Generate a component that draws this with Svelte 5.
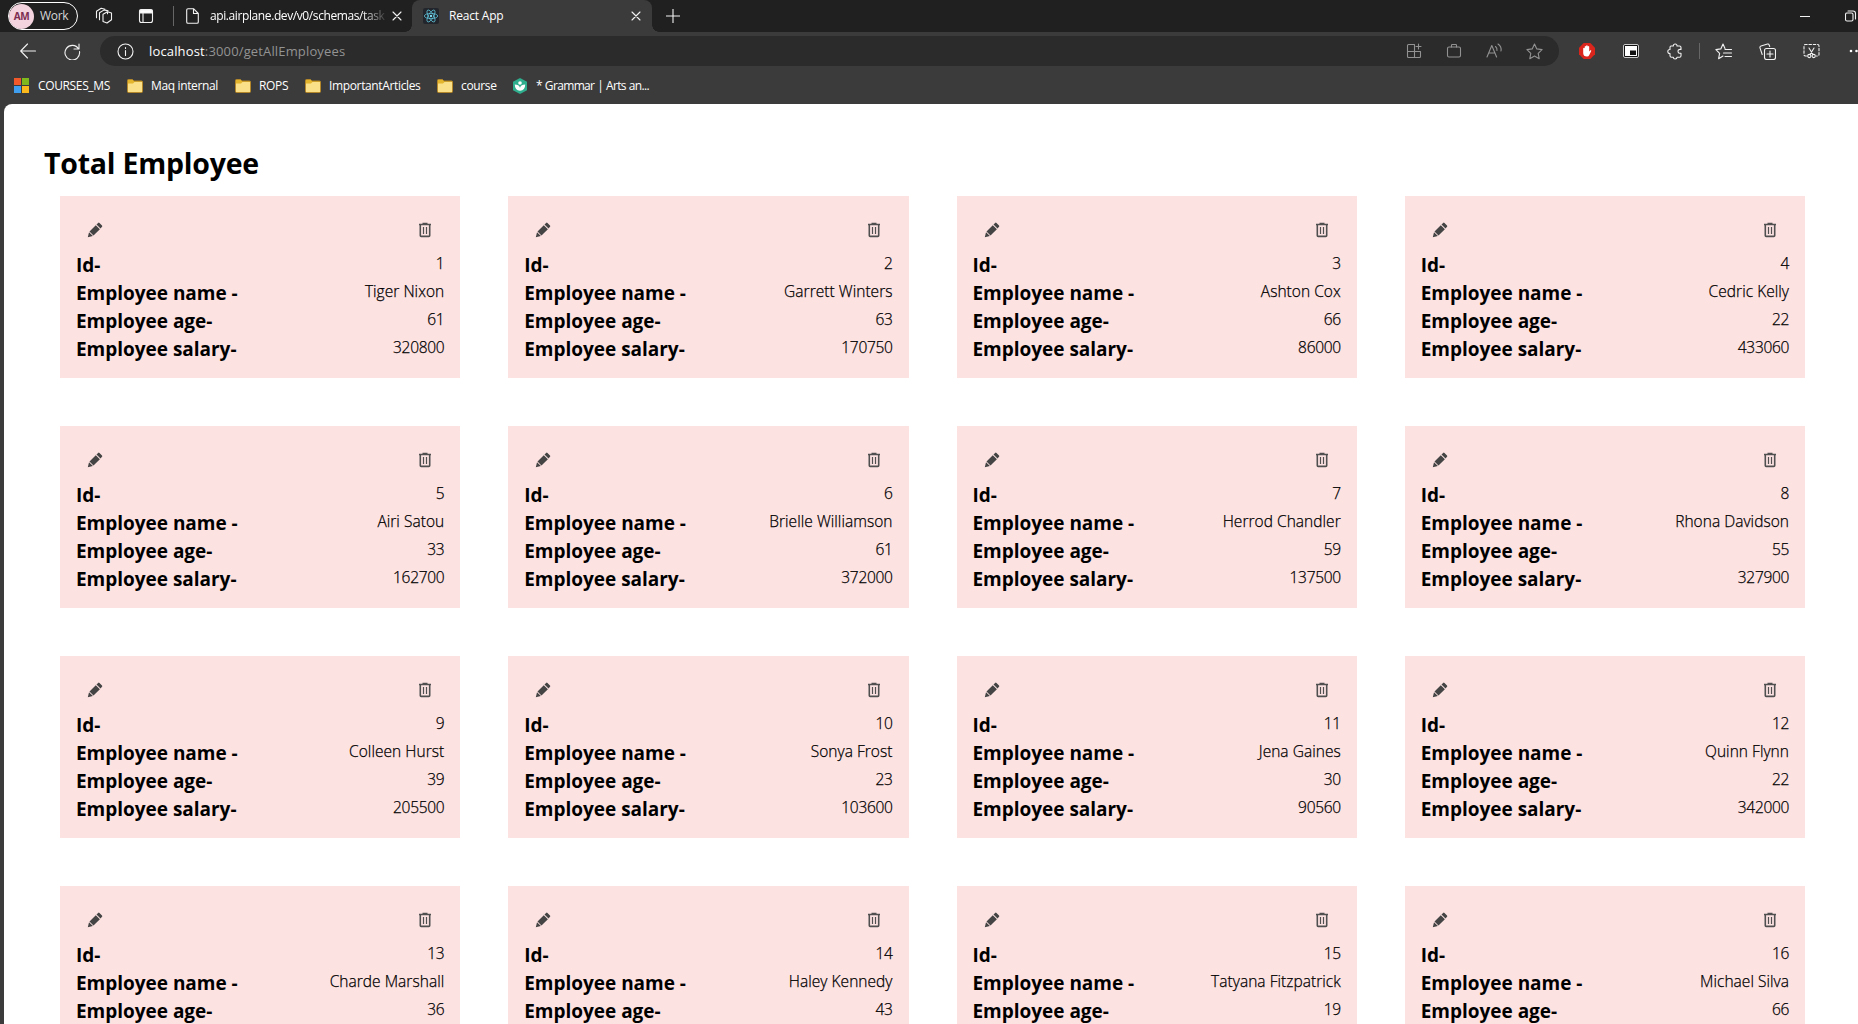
<script>
  const employees = [
    ['Tiger Nixon', 61, 320800],
    ['Garrett Winters', 63, 170750],
    ['Ashton Cox', 66, 86000],
    ['Cedric Kelly', 22, 433060],
    ['Airi Satou', 33, 162700],
    ['Brielle Williamson', 61, 372000],
    ['Herrod Chandler', 59, 137500],
    ['Rhona Davidson', 55, 327900],
    ['Colleen Hurst', 39, 205500],
    ['Sonya Frost', 23, 103600],
    ['Jena Gaines', 30, 90560],
    ['Quinn Flynn', 22, 342000],
    ['Charde Marshall', 36, 470600],
    ['Haley Kennedy', 43, 313500],
    ['Tatyana Fitzpatrick', 19, 385750],
    ['Michael Silva', 66, 198500]
  ].map(([name, age, salary], i) => ({ id: i + 1, name, age, salary }));
</script>

{#snippet folder()}
  <svg width="16" height="16" viewBox="0 0 16 16">
    <path d="M.5 2.500q0-1 1-1h4l1.500 1.500h7.500q1 0 1 1v9.500q0 1-1 1h-13q-1 0-1-1z" fill="#e3b52d" stroke="#b3872a" />
    <path d="M1 5.500h5l1.500-1.500h7.500v9.500q0 .5-.5.5h-13q-.5 0-.5-.5z" fill="#fbe08a" />
  </svg>
{/snippet}

{#snippet cross()}
  <svg width="10" height="10" viewBox="0 0 10 10" class="line"><path d="M1 1l8 8M9 1l-8 8" /></svg>
{/snippet}

<div class="browser">
  <div class="tabstrip">
    <div class="profile"><span class="avatar">AM</span><span class="work">Work</span></div>
    <svg class="line workspaces" width="18" height="18" viewBox="0 0 18 18">
      <path d="M8 7.200l4.500-2.400 4 1.200v6.700l-4.500 3.300-4-1.500zM12.500 4.800v2" />
      <path d="M4.500 12.800V5.700l4.700-2.800 3.800 1M1.500 10.800V4.200l4.700-2.900 3.800.9" />
    </svg>
    <svg class="line vertical" width="16" height="16" viewBox="0 0 16 16">
      <rect x="1.500" y="1.500" width="13" height="13" rx="2" />
      <path d="M2 2h12v3H2z" fill="#fff" /><path d="M5 5.500v9" />
    </svg>
    <span class="divider"></span>
    <div class="tab">
      <svg class="line" width="13" height="16" viewBox="0 0 13 16"><path d="M2 .7h5.500l4.800 4.800V14q0 1.300-1.300 1.300H2Q.7 15.300.7 14V2Q.7.700 2 .7zM7.500.7v4.800h4.800" /></svg>
      <span class="tabtext fade">api.airplane.dev/v0/schemas/task</span>
      {@render cross()}
    </div>
    <div class="tab active">
      <svg width="16" height="16" viewBox="0 0 16 16">
        <rect width="16" height="16" rx="2" fill="#22252b" />
        <g fill="none" stroke="#61c5de" stroke-width=".75">
          <ellipse cx="8" cy="8" rx="6.700" ry="2.600" />
          <ellipse cx="8" cy="8" rx="6.700" ry="2.600" transform="rotate(60 8 8)" />
          <ellipse cx="8" cy="8" rx="6.700" ry="2.600" transform="rotate(120 8 8)" />
        </g>
        <circle cx="8" cy="8" r="1.200" fill="#7fdcf2" />
      </svg>
      <span class="tabtext">React App</span>
      {@render cross()}
    </div>
    <svg class="line plus" width="14" height="14" viewBox="0 0 14 14"><path d="M7 0v14M0 7h14" /></svg>
    <svg class="line minimise" width="10" height="10" viewBox="0 0 10 10"><path d="M0 5.500h10" /></svg>
    <svg class="line restore" width="12" height="12" viewBox="0 0 12 12"><rect x=".5" y="3" width="7.500" height="8" rx="1.500" /><path d="M3 1h5q2.500 0 2.500 2.500V9" /></svg>
  </div>

  <div class="toolbar">
    <svg class="line back" width="17" height="16" viewBox="0 0 17 16"><path d="M15.500 8H.7M7.500 1L.7 8l6.800 7" /></svg>
    <svg class="line reload" width="17" height="17" viewBox="0 0 17 17"><path d="M14.600 6A7.300 7.300 0 1 0 15.500 8.500M15 1v5h-5" /></svg>
    <div class="address">
      <svg class="line info" width="17" height="17" viewBox="0 0 17 17"><circle cx="8.500" cy="8.500" r="7.500" /><path d="M8.500 7.500v5M8.500 4.500v1" /></svg>
      <span class="url"><b>localhost</b>:3000/getAllEmployees</span>
      <span class="slot"><svg class="line" width="16" height="16" viewBox="0 0 16 16"><path d="M8.500 1.500H2.500q-1 0-1 1v11q0 1 1 1h11q1 0 1-1V8.500H1.500M8.500 1.500v13M12.500 1v5M10 3.500h5" /></svg></span>
      <span class="slot"><svg class="line" width="16" height="16" viewBox="0 0 16 16"><rect x="1.500" y="4" width="13" height="10" rx="1.500" /><path d="M5.500 4V2.300q0-.8.8-.8h3.400q.8 0 .8.8V4" /></svg></span>
      <span class="slot"><svg class="line" width="17" height="16" viewBox="0 0 17 16"><path d="M1 14L5.800 2.500 10.600 14M2.700 10h6.200M9.500 3.500q1.800 1.500 1.500 4M12 1q3.800 2.500 3 7" /></svg></span>
      <span class="slot"><svg class="line" width="17" height="17" viewBox="0 0 17 17"><path d="M8.500 1l2.300 4.900 5.300.7-3.900 3.700 1 5.400-4.700-2.600-4.700 2.600 1-5.400L.9 6.600l5.300-.7z" /></svg></span>
    </div>
    <div class="extensions">
      <span class="slot">
        <svg width="16" height="16" viewBox="0 0 16 16">
          <path d="M4.700 0h6.600L16 4.700v6.600L11.300 16H4.700L0 11.300V4.700z" fill="#d9251c" />
          <path d="M4.200 8.500V5.300q.8-1 1.500 0V3.600q.7-1 1.400 0v-.9q.8-1 1.600 0v.9q.8-1 1.500 0v4.800l1.200-1.200q1.200-.3.8.8l-1.900 4q-.6 1.500-2.300 1.500Q4.200 13.500 4.200 10z" fill="#fff" />
        </svg>
      </span>
      <span class="slot">
        <svg width="16" height="16" viewBox="0 0 16 16">
          <rect x=".5" y="1.500" width="15" height="13" rx="1.500" fill="#111" stroke="#c8c8c8" />
          <rect x="2" y="3" width="12" height="10" fill="#fff" /><rect x="7" y="7.500" width="6" height="4.500" fill="#111" />
        </svg>
      </span>
      <span class="slot"><svg class="line" width="16" height="17" viewBox="0 0 16 17"><path d="M4 3h2.300Q6.300 1 8.200 1T10 3h2.500q1.500 0 1.500 1.500V6.500q-3-.5-3 1.800t3 1.900v2.600q0 1.500-1.500 1.500H10Q10 16 8.200 16t-1.900-1.700H4.500Q3 14.300 3 12.800V10.500Q.8 10.500.8 8.500T3 6.500V4.500Q3 3 4 3z" /></svg></span>
      <span class="divider tall"></span>
      <span class="slot"><svg class="line" width="17" height="17" viewBox="0 0 17 17"><path d="M10 5.500L8 1 5.800 5.900.9 6.600l3.700 3.700-1 5.400L8 13M10 6.500h6.500M8.500 10h8M10 13.500h6.500" /></svg></span>
      <span class="slot"><svg class="line" width="17" height="17" viewBox="0 0 17 17"><rect x="5.500" y="5.500" width="11" height="11" rx="2" /><path d="M11 8v6M8 11h6M3.200 11.500L1 4.800Q.6 3.500 2 3L8.500 1q1.300-.3 1.700 1l.5 1.500" /></svg></span>
      <span class="slot"><svg class="line" width="17" height="16" viewBox="0 0 17 16"><path d="M3.500 13H2.500Q1 13 1 11.500V3Q1 1.500 2.500 1.500h12Q16 1.500 16 3v8.500q0 1.500-1.500 1.500h-1" stroke-dasharray="2.500 1.800" /><path d="M6 5l4 6.500M11 5l-4 6.500" /><circle cx="6.300" cy="13" r="1.600" /><circle cx="10.700" cy="13" r="1.600" /></svg></span>
      <svg class="more" width="16" height="16" viewBox="0 0 16 16" fill="#fff"><circle cx="3" cy="8" r="1.300" /><circle cx="8.500" cy="8" r="1.300" /><circle cx="14" cy="8" r="1.300" /></svg>
    </div>
  </div>

  <div class="bookmarks">
    <a class="b1" href="#top">
      <svg width="16" height="16" viewBox="0 0 16 16"><path d="M0 0h7v7H0z" fill="#f1592a" /><path d="M8 0h7v7H8z" fill="#7fb81c" /><path d="M0 8h7v7H0z" fill="#3f9fee" /><path d="M8 8h7v7H8z" fill="#fcb91b" /></svg>COURSES_MS</a>
    <a class="b2" href="#top">{@render folder()}Maq internal</a>
    <a class="b3" href="#top">{@render folder()}ROPS</a>
    <a class="b4" href="#top">{@render folder()}ImportantArticles</a>
    <a class="b5" href="#top">{@render folder()}course</a>
    <a class="b6" href="#top">
      <svg width="16" height="16" viewBox="0 0 16 16"><path d="M8 0l7 3.800v8.400L8 16l-7-3.800V3.800z" fill="#2fae8d" /><circle cx="8" cy="5" r="1.800" fill="#fff" /><path d="M2.800 6.500Q7 6.500 8 9.800q1-3.300 5.200-3.300 0 5.800-5.200 6.200-5.200-.4-5.200-6.200z" fill="#fff" /></svg>* Grammar | Arts an...</a>
  </div>

  <main>
    <h1>Total Employee</h1>
    <div class="grid">
      {#each employees as e (e.id)}
        <article>
          <div class="actions">
            <svg width="16" height="16" viewBox="0 0 16 16" fill="#444">
              <path d="M.8 15.200l1.200-5 3.900 3.800zM2.500 9.500l6.300-6.300 4.100 4-6.400 6.400zM9.500 2.500l1.600-1.600q.7-.6 1.400 0l2.500 2.500q.7.700 0 1.400l-1.500 1.600z" />
            </svg>
            <svg width="16" height="16" viewBox="0 0 16 16" fill="none" stroke="#505050">
              <path d="M2 2.500h12M5.500 1.500h5" stroke-width="1.400" />
              <path d="M3.300 3v10.600q0 .8.800.8h7.800q.8 0 .8-.8V3" stroke-width="1.600" />
              <path d="M6.500 5v7M9.500 5v7" stroke-width="1.200" />
            </svg>
          </div>
          <dl>
            <div><dt>Id-</dt><dd class="num">{e.id}</dd></div>
            <div><dt>Employee name -</dt><dd>{e.name}</dd></div>
            <div><dt>Employee age-</dt><dd class="num">{e.age}</dd></div>
            <div><dt>Employee salary-</dt><dd class="num">{e.salary}</dd></div>
          </dl>
        </article>
      {/each}
    </div>
  </main>
</div>

<style>
  .browser {
    width: 100vw;
    height: 100vh;
    overflow: hidden;
    display: flex;
    flex-direction: column;
    background: #3b3b3b;
    color: #fff;
    font-family: "Open Sans", "Noto Sans", sans-serif;
    font-size: 12px;
  }
  svg { display: block; flex: none; }
  .line { fill: none; stroke: #f2f2f2; stroke-width: 1.1; stroke-linejoin: round; stroke-linecap: round; }

  .tabstrip { height: 32px; flex: none; display: flex; align-items: center; background: #202020; overflow: hidden; }
  .profile {
    box-sizing: border-box;
    width: 70px;
    height: 28px;
    margin-left: 8px;
    border: 1px solid #fff;
    border-radius: 14px;
    display: flex;
    align-items: center;
    gap: 6px;
    flex: none;
  }
  .avatar {
    width: 25px;
    height: 25px;
    border-radius: 50%;
    background: #f3d3de;
    color: #7c2d50;
    font-weight: 700;
    font-size: 10px;
    line-height: 25px;
    text-align: center;
    letter-spacing: -0.3px;
  }
  .work { font-size: 12px; letter-spacing: -0.3px; color: #d6d6d6; padding-bottom: 1px; }
  .workspaces { margin-left: 17px; }
  .vertical { margin-left: 25px; }
  .divider { width: 1px; height: 20px; margin-left: 19px; background: #666; flex: none; }
  .tab { display: flex; align-items: center; flex: none; width: 226px; margin-left: 12px; height: 32px; }
  .tabtext { flex: none; width: 175px; margin-left: 11px; margin-right: 7px; padding-bottom: 1px; white-space: nowrap; letter-spacing: -0.4px; }
  .fade { -webkit-mask-image: linear-gradient(90deg, #000 152px, transparent 178px); mask-image: linear-gradient(90deg, #000 152px, transparent 178px); }
  .active {
    position: relative;
    box-sizing: border-box;
    width: 240px;
    margin-left: 0;
    padding-left: 11px;
    background: #3b3b3b;
    border-radius: 8px 8px 0 0;
  }
  .active .tabtext { width: 170px; margin-left: 10px; margin-right: 12px; letter-spacing: -0.2px; }
  .active::before, .active::after { content: ""; position: absolute; bottom: 0; width: 7px; height: 7px; }
  .active::before { left: -7px; background: radial-gradient(circle at 0 0, transparent 6.5px, #3b3b3b 7px); }
  .active::after { right: -7px; background: radial-gradient(circle at 100% 0, transparent 6.5px, #3b3b3b 7px); }
  .plus { margin-left: 14px; }
  .minimise { margin-left: auto; }
  .restore { margin-left: 35px; margin-right: 1px; }

  .toolbar { height: 38px; flex: none; display: flex; align-items: center; }
  .back { margin-left: 20px; }
  .reload { margin-left: 27px; }
  .address { width: 1459px; box-sizing: border-box; height: 30px; margin-left: 19px; padding-right: 5px; border-radius: 15px; background: #2b2b2b; display: flex; align-items: center; flex: none; }
  .info { margin-left: 17px; }
  .url { margin-left: 15px; font-size: 13px; letter-spacing: 0.15px; color: #939393; flex: 1; }
  .url b { font-weight: 400; color: #fff; }
  .slot { width: 40px; display: flex; justify-content: center; flex: none; }
  .address .slot .line { stroke: #929292; }
  .extensions { display: flex; align-items: center; margin-left: 6px; }
  .extensions .slot { width: 44px; }
  .tall { height: 16px; margin: 0 1px 0 2px; }
  .more { margin-left: 15px; }

  .bookmarks { height: 31px; padding-bottom: 3px; flex: none; display: flex; align-items: center; padding-left: 14px; }
  .bookmarks a { display: flex; align-items: center; gap: 8px; color: #fff; text-decoration: none; white-space: nowrap; letter-spacing: -0.36px; flex: none; }
  .b1 { width: 113px; }
  .b2 { width: 108px; }
  .b3 { width: 70px; }
  .b4 { width: 132px; }
  .b5 { width: 75px; }
  .bookmarks .b6 { letter-spacing: -0.65px; word-spacing: 0.4px; }

  main { flex: 1; min-height: 0; overflow: hidden; margin-left: 4px; padding: 39px 53px 0 40px; background: #fff; color: #000; border-radius: 8px 0 0 0; }
  h1 { margin: 0; height: 53px; font-size: 28.5px; line-height: 40px; font-weight: 700; letter-spacing: -0.22px; }
  .grid { display: grid; grid-template-columns: repeat(4, 1fr); gap: 48px; padding-left: 16px; }
  article { box-sizing: border-box; height: 182px; padding: 26px 16px 0; background: #fde2e2; }
  .actions { display: flex; justify-content: space-between; padding: 0 11px; margin-bottom: 13px; }
  dl { margin: 0; }
  dl div { display: flex; justify-content: space-between; height: 28px; }
  dt { font-size: 19px; line-height: 28px; font-weight: 700; letter-spacing: -0.02px; }
  dd { margin: 0; font-size: 15.5px; line-height: 24px; font-weight: 300; letter-spacing: 0.04px; -webkit-text-stroke: 0.25px #000; }
  .num { letter-spacing: -0.32px; }
</style>
